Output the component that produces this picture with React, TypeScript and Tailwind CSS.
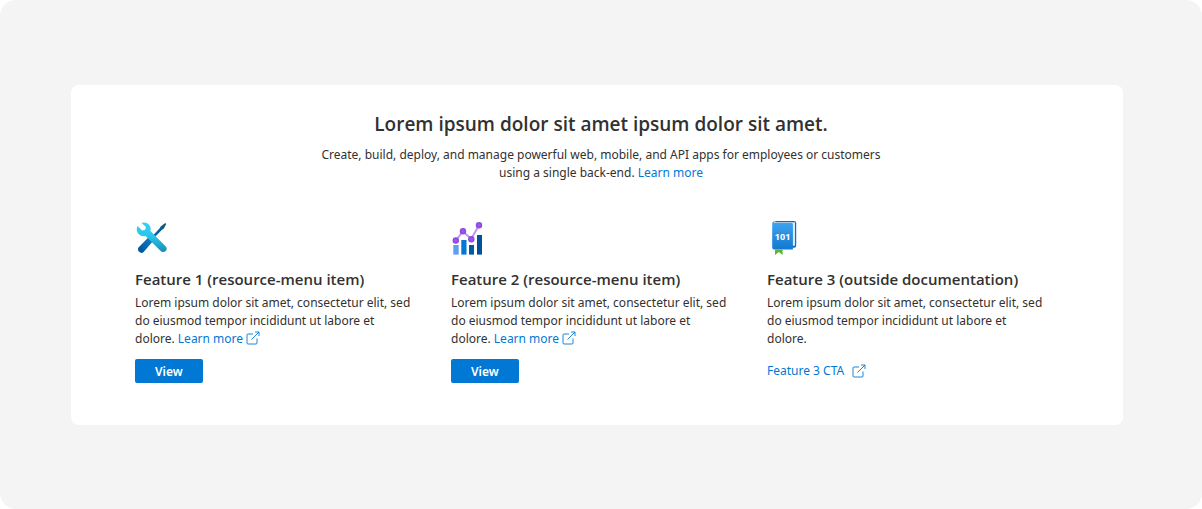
import React, { useId } from "react";

function ExternalIcon() {
  return (
    <svg aria-hidden="true" viewBox="0 0 14 14" className="inline-block size-3.5 shrink-0 align-[-2px]" fill="none" stroke="currentColor" strokeWidth="0.9">
      <path d="M7 3H2Q1 3 1 4v8q0 1 1 1h8q1 0 1-1V7.5" />
      <path d="M9 1h4v4M13 1 5.5 8.5" />
    </svg>
  );
}

function ToolsIcon() {
  const id = useId();
  return (
    <svg aria-hidden="true" viewBox="0 0 32 32" className="size-8">
      <defs>
        <linearGradient id={id + "a"} x1="3" y1="31" x2="30" y2="3" gradientUnits="userSpaceOnUse">
          <stop offset="0.1" stopColor="#005ba1" />
          <stop offset="0.45" stopColor="#1478c4" />
          <stop offset="0.75" stopColor="#076097" />
          <stop offset="1" stopColor="#0c5680" />
        </linearGradient>
        <linearGradient id={id + "b"} x1="15" y1="1" x2="15" y2="32" gradientUnits="userSpaceOnUse">
          <stop offset="0" stopColor="#32d4f5" />
          <stop offset="0.45" stopColor="#2bc5e8" />
          <stop offset="1" stopColor="#198ab3" />
        </linearGradient>
      </defs>
      <path fill={"url(#" + id + "a)"} d="m30.3 2 .9.9-2.5 4.8-1.4.7-9.3 9.5 1 1.2L8.4 31.3q-2.2 1.5-4.3-.5t-.6-4.4L14 15.8l1.6 1.2 9.3-9.9.7-1.5Z" />
      <path fill={"url(#" + id + "b)"} d="M8.4 1.6c5-.4 8.3 4 7 8.3l15.2 15.3c1.5 1.5 1.5 3.5.1 4.9s-3.5 1.3-5-.2L10.6 15C6 16.2 1.5 12.6 1.8 7.8q.1-1.5.8-2.8l4.6 4.6 2.9-.8.8-2.8-4.3-4Q7.5 1.7 8.4 1.6Z" />
    </svg>
  );
}

function ChartIcon() {
  const id = useId();
  return (
    <svg aria-hidden="true" viewBox="0 0 32 34" className="h-[34px] w-8">
      <defs>
        <radialGradient id={id}>
          <stop offset="0" stopColor="#a65af0" />
          <stop offset="1" stopColor="#8745e0" />
        </radialGradient>
      </defs>
      <path fill="#5ea0ef" d="M2.3 24h5.4v9.6H2.3z" />
      <path fill="#0078d4" d="M10.3 19h5.2v14.6h-5.2z" />
      <path fill="#005ba1" d="M18 24h5v9.6h-5z" />
      <path fill="#00539b" d="M26 14h5v19.6h-5z" />
      <path d="m4.8 19.5 7-9.2 8.3 7.7 8.1-14" fill="none" stroke="#b796f9" strokeWidth="1.9" />
      <circle cx="4.8" cy="19.5" r="3.2" fill={"url(#" + id + ")"} />
      <circle cx="12" cy="10.3" r="3.2" fill={"url(#" + id + ")"} />
      <circle cx="20.3" cy="18.2" r="3.2" fill={"url(#" + id + ")"} />
      <circle cx="28" cy="4.2" r="3.2" fill={"url(#" + id + ")"} />
    </svg>
  );
}

function GuideIcon() {
  const id = useId();
  return (
    <svg aria-hidden="true" viewBox="0 0 32 36" className="h-9 w-8">
      <defs>
        <linearGradient id={id} x1="0" y1="0" x2="0" y2="1">
          <stop offset="0" stopColor="#41a5ee" />
          <stop offset="1" stopColor="#1279d0" />
        </linearGradient>
      </defs>
      <path fill="#0f6cbd" d="M8.3 0H27q2.2 0 2.2 2.2v22.6q0 2-2 2H8z" />
      <path fill="#d5eafb" d="M7.5 1.2H28v23.5H8z" />
      <path fill={"url(#" + id + ")"} d="M5.2 3.1Q5.2.4 8 .1L7.1 2h17.4q1.4 0 1.4 1.4v25H7.1q-1.9 0-1.9-1.9z" />
      <path fill="#5eb62e" d="M8 28.4h7.6v5.5L11.8 31 8 33.9z" />
      <text x="15.6" y="18.5" textAnchor="middle" fill="#fff" fontSize="9" className="font-['Open_Sans',sans-serif] font-bold">101</text>
    </svg>
  );
}

const body = "Lorem ipsum dolor sit amet, consectetur elit, sed do eiusmod tempor incididunt ut labore et dolore.";

interface FeatureProps {
  icon: React.ReactNode;
  title: string;
  external?: boolean;
}

function Feature({ icon, title, external = false }: FeatureProps) {
  return (
    <article className="flex flex-col items-start pr-5">
      <div className="flex h-9 items-start">{icon}</div>
      <h2 className="mt-3 font-['Open_Sans',sans-serif] text-[15px] leading-5 font-semibold">{title}</h2>
      <p className="mt-[5px] text-xs leading-[18px]">
        {body}{" "}
        {!external && (
          <a href="#learn" className="whitespace-nowrap text-[#0078d4] hover:underline">
            Learn more <ExternalIcon />
          </a>
        )}
      </p>
      {external ? (
        <a href="#feature" className="mt-[11px] flex h-6 items-center gap-2 text-xs leading-[18px] text-[#0078d4] hover:underline">
          Feature 3 CTA <ExternalIcon />
        </a>
      ) : (
        <button type="button" className="mt-[11px] h-6 rounded-xs bg-[#0078d4] px-5 pt-0.5 text-xs leading-[18px] font-semibold text-white hover:bg-[#106ebe]">
          View
        </button>
      )}
    </article>
  );
}

export default function App() {
  return (
    <main className="rounded-2xl bg-[#f4f4f4] pt-[85px] pr-[79px] pb-[84px] pl-[71px] font-['Noto_Sans',sans-serif] text-[#323130]">
      <section className="rounded-lg bg-white pt-6 pr-14 pb-[42px] pl-16">
        <header className="mx-auto max-w-[590px] text-center">
          <h1 className="font-['Open_Sans',sans-serif] text-[19px] leading-[30px] font-semibold">Lorem ipsum dolor sit amet ipsum dolor sit amet.</h1>
          <p className="mt-[7px] text-xs leading-[18px]">
            Create, build, deploy, and manage powerful web, mobile, and API apps for employees or customers using a single back-end.{" "}
            <a href="#learn" className="inline-block text-[#0078d4] hover:underline">Learn more</a>
          </p>
        </header>
        <div className="mt-[39px] grid grid-cols-3 gap-4">
          <Feature icon={<ToolsIcon />} title="Feature 1 (resource-menu item)" />
          <Feature icon={<ChartIcon />} title="Feature 2 (resource-menu item)" />
          <Feature icon={<GuideIcon />} title="Feature 3 (outside documentation)" external />
        </div>
      </section>
    </main>
  );
}
